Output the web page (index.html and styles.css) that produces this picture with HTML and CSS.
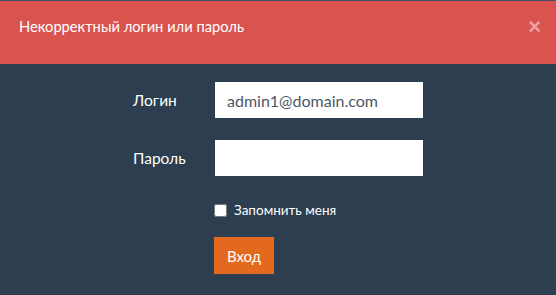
FILE: index.html
```html
<!DOCTYPE html>
<html lang="ru">

<head>
    <meta charset="UTF-8">
    <meta name="viewport" content="width=device-width, initial-scale=1.0">
    <title>Вход</title>
    <link rel="stylesheet" href="styles.css">
</head>

<body>
    <div class="alert">
        <span>Некорректный логин или пароль</span>
        <button type="button" class="close">&times;</button>
    </div>

    <form class="login-form">
        <div class="row">
            <label for="login">Логин</label>
            <input type="text" id="login" value="admin1@domain.com">
        </div>
        <div class="row">
            <label for="password">Пароль</label>
            <input type="password" id="password">
        </div>
        <div class="row remember">
            <label class="check"><input type="checkbox"> Запомнить меня</label>
        </div>
        <div class="row submit">
            <button type="submit" class="btn">Вход</button>
        </div>
    </form>
</body>

</html>
```

FILE: styles.css
```css
body {
    font-family: Lato, "Open Sans", sans-serif;
    margin: 0;
    background-color: #2c3e50;
    border-top: 1px solid #415163;
    color: #fff;
}

.alert {
    display: flex;
    justify-content: space-between;
    align-items: flex-start;
    height: 63px;
    box-sizing: border-box;
    padding: 15px 20px 0 19px;
    background-color: #d9544f;
    font-size: 14.7px;
    line-height: 21px;
}

.close {
    background: none;
    border: none;
    padding: 0;
    color: #fff;
    opacity: 0.45;
    font-family: Arial, sans-serif;
    font-weight: bold;
    font-size: 22px;
    line-height: 21px;
    margin-right: -5px;
    cursor: pointer;
}

.login-form {
    width: 290px;
    margin: 18px auto 0 auto;
}

.row {
    display: flex;
    align-items: center;
    margin-bottom: 22px;
}

.row label {
    width: 82px;
    font-size: 15.5px;
}

.row input[type="text"],
.row input[type="password"] {
    width: 208px;
    height: 36px;
    box-sizing: border-box;
    border: none;
    padding: 0 12px;
    font-family: Lato, "Open Sans", sans-serif;
    font-size: 16px;
    color: #4c5866;
    outline: none;
}

.remember {
    padding-left: 81px;
    margin-top: 26px;
    margin-bottom: 19px;
}

.row .check {
    width: auto;
    display: flex;
    align-items: center;
    font-size: 13.5px;
}

.check input {
    width: 13px;
    height: 13px;
    margin: 0 7px 0 0;
}

.submit {
    padding-left: 81px;
}

.btn {
    background-color: #e2691e;
    color: #fff;
    border: none;
    height: 37px;
    padding: 0 13px;
    font-family: Lato, "Open Sans", sans-serif;
    font-size: 15px;
    cursor: pointer;
}
```
